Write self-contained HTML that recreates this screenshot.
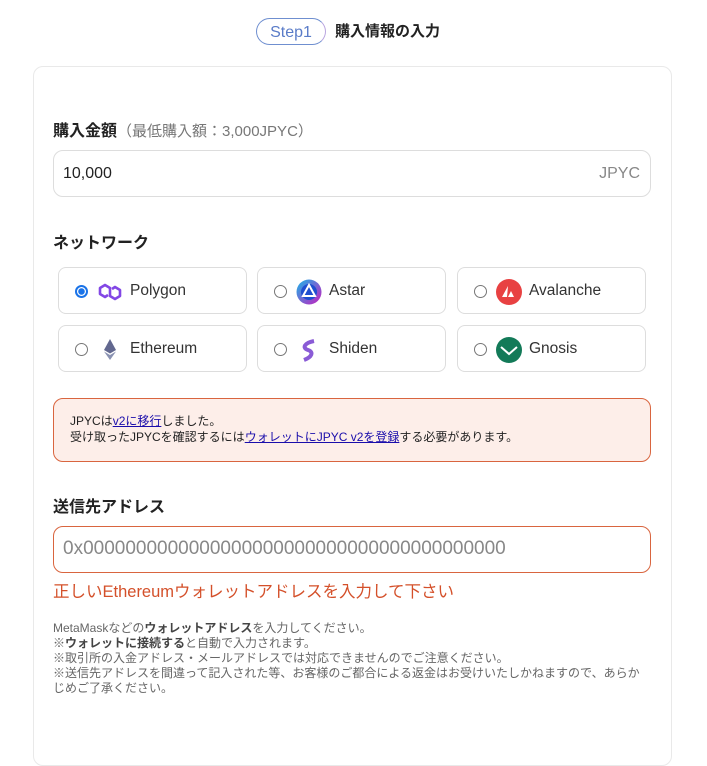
<!DOCTYPE html>
<html><head><meta charset="utf-8"><style>
*{box-sizing:border-box;margin:0;padding:0}
body{width:707px;height:711px;background:#fff;font-family:"Liberation Sans","Noto Sans CJK JP",sans-serif;color:#222;position:relative;overflow:hidden}
.abs{position:absolute}
.pill{left:256px;top:18px;width:70px;height:27px;border-radius:14px;border:1.5px solid #6f8fd0;border-right-color:#b9a5df;color:#5a7cc8;font-size:16px;text-align:center;line-height:25px;padding-top:1px}
.title{left:335px;top:20px;font-size:15px;font-weight:bold}
.card{left:33px;top:66px;width:639px;height:700px;border:1px solid #e9e9e9;border-radius:10px}
.lbl{font-size:16px;font-weight:bold;left:53px}
.inp{left:53px;width:598px;height:47px;border:1px solid #ddd;border-radius:10px}
.opt{width:189px;height:47px;border:1px solid #ddd;border-radius:8px}
.opt .r{position:absolute;left:16px;top:17px;width:13px;height:13px;border:1px solid #777;border-radius:50%}
.opt .i{position:absolute;left:38px;top:11px;width:26px;height:26px}
.opt .t{position:absolute;left:71px;top:14px;font-size:15.5px;color:#333}
a{color:#1a0dab;text-decoration:underline}
</style></head><body>
<div class="abs pill">Step1</div>
<div class="abs title">購入情報の入力</div>
<div class="abs card"></div>
<div class="abs lbl" style="top:117px">購入金額<span style="font-weight:normal;color:#777;font-size:15px">（最低購入額：3,000JPYC）</span></div>
<div class="abs inp" style="top:150px"><span class="abs" style="left:9px;top:14px;font-size:16px">10,000</span><span class="abs" style="right:10px;top:14px;font-size:16px;color:#888">JPYC</span></div>
<div class="abs lbl" style="top:229px">ネットワーク</div>

<div class="abs opt" style="left:58px;top:267px"><div class="r" style="border:2px solid #1a73e8;background:radial-gradient(#1a73e8 3px,#fff 3.5px)"></div>
<svg class="i" viewBox="0 0 26 26"><path d="M15 10 L18 8 L23 11 L23 17 L18 20 L13 17 L13 9 L8 6 L3 9 L3 15 L8 18 L11 16" fill="none" stroke="#8247e5" stroke-width="2.6" stroke-linejoin="round"/></svg><span class="t">Polygon</span></div>
<div class="abs opt" style="left:257px;top:267px"><div class="r"></div>
<svg class="i" viewBox="0 0 26 26"><defs><linearGradient id="a" x1="0" y1="0" x2="1" y2="1"><stop offset="0" stop-color="#19b5e8"/><stop offset="1" stop-color="#c81fbf"/></linearGradient></defs><circle cx="13" cy="13" r="12.5" fill="url(#a)"/><circle cx="13" cy="13" r="8" fill="#1e4fd0"/><path d="M13 6 L19 17 L7 17 Z" fill="none" stroke="#fff" stroke-width="2"/></svg><span class="t">Astar</span></div>
<div class="abs opt" style="left:457px;top:267px"><div class="r"></div>
<svg class="i" viewBox="0 0 26 26"><circle cx="13" cy="13" r="13" fill="#e84142"/><path d="M12 7 L6 18 L11 18 Z M15 12 L12 18 L18 18 Z" fill="#fff"/></svg><span class="t">Avalanche</span></div>

<div class="abs opt" style="left:58px;top:325px"><div class="r"></div>
<svg class="i" viewBox="0 0 26 26"><path d="M13 2 L19 13 L13 16.5 L7 13 Z" fill="#62688f"/><path d="M13 18 L19 14.5 L13 23 L7 14.5 Z" fill="#8a92b2"/></svg><span class="t">Ethereum</span></div>
<div class="abs opt" style="left:257px;top:325px"><div class="r"></div>
<svg class="i" viewBox="0 0 26 26"><path d="M18 4 C8 6 6 11 12 13 C18 15 16 20 8 23" fill="none" stroke="#8a5bd6" stroke-width="4"/></svg><span class="t">Shiden</span></div>
<div class="abs opt" style="left:457px;top:325px"><div class="r"></div>
<svg class="i" viewBox="0 0 26 26"><circle cx="13" cy="13" r="13" fill="#137a58"/><path d="M5 10 L13 17 L21 10" fill="none" stroke="#fff" stroke-width="2"/></svg><span class="t">Gnosis</span></div>

<div class="abs" style="left:53px;top:398px;width:598px;height:64px;background:#fdeee9;border:1px solid #d9653f;border-radius:10px;font-size:12px;line-height:16px;padding:14px 0 0 16px;color:#222">JPYCは<a>v2に移行</a>しました。<br>受け取ったJPYCを確認するには<a>ウォレットにJPYC v2を登録</a>する必要があります。</div>
<div class="abs lbl" style="top:493px">送信先アドレス</div>
<div class="abs inp" style="top:526px;border-color:#d9653f"><span class="abs" style="left:9px;top:11px;font-size:19px;color:#888">0x0000000000000000000000000000000000000000</span></div>
<div class="abs" style="left:53px;top:578px;font-size:16.5px;color:#d4502a">正しいEthereumウォレットアドレスを入力して下さい</div>
<div class="abs" style="left:53px;top:621px;width:594px;font-size:12px;line-height:15px;color:#666">MetaMaskなどの<b style="color:#444">ウォレットアドレス</b>を入力してください。<br>※<b style="color:#444">ウォレットに接続する</b>と自動で入力されます。<br>※取引所の入金アドレス・メールアドレスでは対応できませんのでご注意ください。<br>※送信先アドレスを間違って記入された等、お客様のご都合による返金はお受けいたしかねますので、あらか<br>じめご了承ください。</div>
</body></html>
